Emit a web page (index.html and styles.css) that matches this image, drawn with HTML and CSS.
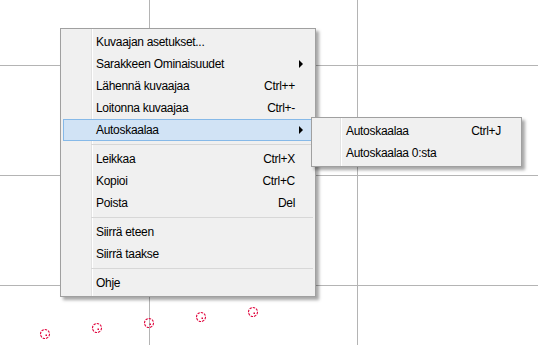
FILE: index.html
```html
<!DOCTYPE html>
<html lang="en">
<head>
  <meta charset="UTF-8" />
  <meta name="viewport" content="width=device-width, initial-scale=1.0" />
  <title>Kuvaaja</title>
  <link rel="stylesheet" href="styles.css">
</head>
<body>

  <div class="plot">
    <svg class="plot-canvas" width="538" height="345" viewBox="0 0 538 345">
      <g class="grid">
        <line x1="149.5" y1="0" x2="149.5" y2="345" />
        <line x1="357.5" y1="0" x2="357.5" y2="345" />
        <line x1="0" y1="65.5" x2="538" y2="65.5" />
        <line x1="0" y1="175.5" x2="538" y2="175.5" />
        <line x1="0" y1="285.5" x2="538" y2="285.5" />
      </g>
      <g class="points">
        <circle cx="45" cy="334" r="4.5" />
        <rect x="45.5" y="334.5" width="1.5" height="1.5" />
        <circle cx="97" cy="328" r="4.5" />
        <rect x="97.5" y="328.5" width="1.5" height="1.5" />
        <circle cx="149" cy="323" r="4.5" />
        <rect x="149.5" y="323.5" width="1.5" height="1.5" />
        <circle cx="201" cy="317" r="4.5" />
        <rect x="201.5" y="317.5" width="1.5" height="1.5" />
        <circle cx="253" cy="312" r="4.5" />
        <rect x="253.5" y="312.5" width="1.5" height="1.5" />
      </g>
    </svg>

    <div class="menu context-menu">
      <div class="menu-item"><span class="label">Kuvaajan asetukset...</span><span class="shortcut"></span><span class="arrow"></span></div>
      <div class="menu-item"><span class="label">Sarakkeen Ominaisuudet</span><span class="shortcut"></span><span class="arrow has-sub"></span></div>
      <div class="menu-item"><span class="label">Lähennä kuvaajaa</span><span class="shortcut">Ctrl++</span><span class="arrow"></span></div>
      <div class="menu-item"><span class="label">Loitonna kuvaajaa</span><span class="shortcut">Ctrl+-</span><span class="arrow"></span></div>
      <div class="menu-item active"><span class="label">Autoskaalaa</span><span class="shortcut"></span><span class="arrow has-sub"></span></div>
      <div class="menu-sep"></div>
      <div class="menu-item"><span class="label">Leikkaa</span><span class="shortcut">Ctrl+X</span><span class="arrow"></span></div>
      <div class="menu-item"><span class="label">Kopioi</span><span class="shortcut">Ctrl+C</span><span class="arrow"></span></div>
      <div class="menu-item"><span class="label">Poista</span><span class="shortcut">Del</span><span class="arrow"></span></div>
      <div class="menu-sep"></div>
      <div class="menu-item"><span class="label">Siirrä eteen</span><span class="shortcut"></span><span class="arrow"></span></div>
      <div class="menu-item"><span class="label">Siirrä taakse</span><span class="shortcut"></span><span class="arrow"></span></div>
      <div class="menu-sep"></div>
      <div class="menu-item"><span class="label">Ohje</span><span class="shortcut"></span><span class="arrow"></span></div>

      <div class="menu submenu">
        <div class="menu-item"><span class="label">Autoskaalaa</span><span class="shortcut">Ctrl+J</span><span class="arrow"></span></div>
        <div class="menu-item"><span class="label">Autoskaalaa 0:sta</span><span class="shortcut"></span><span class="arrow"></span></div>
      </div>
    </div>
  </div>

</body>
</html>
```

FILE: styles.css
```css
* {
  box-sizing: border-box;
}

body {
  margin: 0;
  padding: 0;
  background: #fff;
  font-family: "Liberation Sans", Arial, sans-serif;
  font-size: 12px;
  color: #000;
}

.plot {
  position: relative;
  width: 538px;
  height: 345px;
  overflow: hidden;
}

.plot-canvas {
  position: absolute;
  left: 0;
  top: 0;
}

.grid line {
  stroke: #b4b4b4;
  stroke-width: 1;
}

.points circle {
  fill: none;
  stroke: #e0003a;
  stroke-width: 1.1;
  stroke-dasharray: 2.4 1;
}

.points rect {
  fill: #e0003a;
}

.menu {
  position: absolute;
  display: flex;
  flex-direction: column;
  background-color: #f0f0f0;
  background-image: linear-gradient(to right, transparent 30px, #e2e2e2 30px, #e2e2e2 31px, #fff 31px, #fff 32px, transparent 32px);
  border: 1px solid #a0a0a0;
  padding: 2px;
  box-shadow: 3px 3px 3px rgba(0, 0, 0, 0.35);
}

.context-menu {
  left: 60px;
  top: 28px;
  width: 256px;
}

.submenu {
  left: 250px;
  top: 88px;
  width: 211px;
  background-image: linear-gradient(to right, transparent 28px, #e2e2e2 28px, #e2e2e2 29px, #fff 29px, #fff 30px, transparent 30px);
}

.menu-item {
  display: flex;
  align-items: center;
  height: 22px;
  line-height: 20px;
  padding-left: 32px;
  border: 1px solid transparent;
  white-space: nowrap;
  letter-spacing: -0.3px;
}

.menu-item.active {
  background: #d1e3f5;
  border-color: #86b9e8;
}

.submenu .menu-item {
  padding-left: 31px;
}

.label {
  flex: 1;
}

.shortcut {
  text-align: right;
}

.arrow {
  position: relative;
  width: 17px;
  height: 20px;
}

.arrow.has-sub::after {
  content: "";
  position: absolute;
  left: 4px;
  top: 6px;
  border-left: 4px solid #000;
  border-top: 4px solid transparent;
  border-bottom: 4px solid transparent;
}

.menu-sep {
  height: 1px;
  margin: 3px 0 3px 28px;
  background: #d7d7d7;
}
```
